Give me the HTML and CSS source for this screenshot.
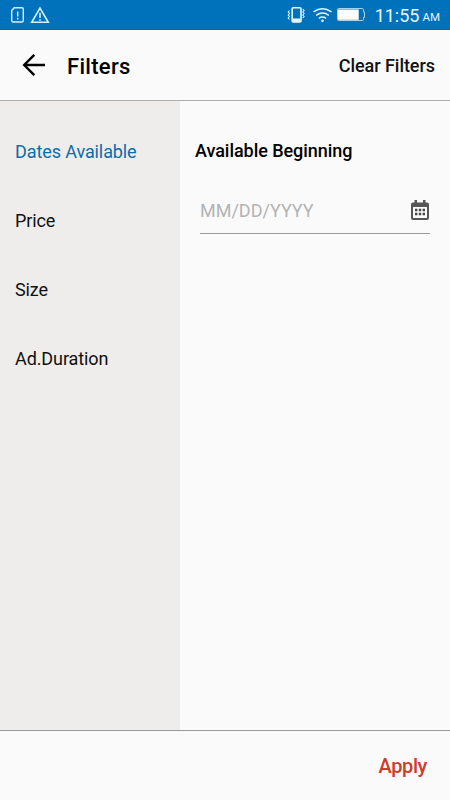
FILE: index.html
```html
<!DOCTYPE html>
<html lang="en">

<head>
  <meta charset="UTF-8">
  <meta name="viewport" content="width=device-width, initial-scale=1.0">
  <title>Filters</title>
  <link rel="stylesheet" href="styles.css">
</head>

<body>
  <div class="app">
    <div class="status-bar">
      <svg class="status-left" width="40" height="18" viewBox="0 0 40 18" fill="none" stroke="#d5f2fb" stroke-width="1.4">
        <path d="M4.2 1.7H12Q13.3 1.7 13.3 3V14.6Q13.3 16 12 16H3Q1.7 16 1.7 14.6V4.5Z" />
        <path d="M7.7 5.5V10.5M7.7 11.8V13.4" />
        <path d="M30 2.2L38.3 16.3H21.7Z" stroke-width="1.6" />
        <path d="M30 6.7V12.1M30 13.2V14.8" stroke-width="1.6" />
      </svg>
      <div class="status-right">
        <svg width="78" height="18" viewBox="0 0 78 18" fill="none" stroke="#e4f7fc" stroke-width="1.3">
          <rect x="5.2" y="1.7" width="8.8" height="14.2" rx="1" stroke-width="1.6" />
          <path d="M5.5 13.8H13.7" stroke-width="2.6" />
          <path d="M2.5 4.5L1.2 6L2.5 7.5L1.2 9L2.5 10.5L1.2 12L2.5 13.5M15.8 3L17.1 4.5L15.8 6L17.1 7.5L15.8 9L17.1 10.5L15.8 12" stroke-width="1.1" />
          <path d="M26.5 5.8Q35.5 -.5 44.5 5.8M29.2 9.3Q35.5 4.7 41.8 9.3M31.9 12.3Q35.5 9.8 39.1 12.3" stroke-width="1.5" />
          <circle cx="35.5" cy="14.7" r="1.3" fill="#e4f7fc" stroke="none" />
          <path d="M51.5 2.5H75.2Q76.5 2.5 76.5 3.7V6H77.5V11.5H76.5V13.4Q76.5 14.5 75.2 14.5H51.5Q50.5 14.5 50.5 13.5V3.5Q50.5 2.5 51.5 2.5Z" stroke="#a5d5ef" stroke-width="1" />
          <rect x="51" y="3.5" width="20.7" height="10.3" fill="#fff" stroke="none" />
        </svg>
        <span class="time">11:55</span>
        <span class="meridiem">AM</span>
      </div>
    </div>

    <div class="header">
      <svg class="back" width="24" height="24" viewBox="0 0 24 24" fill="none" stroke="#000" stroke-width="2.4">
        <path d="M12.3 1.9L2.2 12L12.3 22.1M2.2 12H23" />
      </svg>
      <h1 class="title">Filters</h1>
      <a class="clear">Clear Filters</a>
    </div>

    <div class="content">
      <ul class="menu">
        <li class="menu-item active">Dates Available</li>
        <li class="menu-item">Price</li>
        <li class="menu-item">Size</li>
        <li class="menu-item">Ad.Duration</li>
      </ul>
      <div class="panel">
        <h2 class="panel-title">Available Beginning</h2>
        <div class="date-field">
          <span class="placeholder">MM/DD/YYYY</span>
          <svg width="20" height="21" viewBox="0 0 20 21">
            <path d="M4.5 0H7V2.5H13V0H15.5V2.5H17Q19 2.5 19 4.5V18Q19 20 17 20H3Q1 20 1 18V4.5Q1 2.5 3 2.5H4.5ZM3 7V18H17V7Z" fill="#555" fill-rule="evenodd" />
            <path d="M5 8.8H7.4V11.2H5ZM8.8 8.8H11.2V11.2H8.8ZM12.6 8.8H15V11.2H12.6ZM5 12.8H7.4V15.2H5ZM8.8 12.8H11.2V15.2H8.8ZM12.6 12.8H15V15.2H12.6Z" fill="#444" />
          </svg>
        </div>
      </div>
    </div>

    <div class="footer">
      <a class="apply">Apply</a>
    </div>
  </div>
</body>

</html>
```

FILE: styles.css
```css
html,
body {
  margin: 0;
  padding: 0;
  background-color: #fafafa;
  color: #111;
  font-family: Roboto, sans-serif;
  font-size: 18px;
}

* {
  box-sizing: border-box;
}

.app {
  display: flex;
  flex-direction: column;
  height: 100vh;
}

.status-bar {
  display: flex;
  justify-content: space-between;
  height: 30px;
  padding: 6px 10px 0;
  background-color: #0072bc;
  border-bottom: 1px solid #0062a8;
  color: #e4f7fc;
}

.status-right {
  display: flex;
  align-items: flex-start;
}

.time {
  margin-left: 10px;
  font-size: 18px;
  line-height: 20px;
}

.meridiem {
  margin-left: 3px;
  font-size: 11.5px;
  line-height: 23px;
}

.header {
  display: flex;
  align-items: center;
  height: 71px;
  padding: 0 15px 0 22px;
  border-bottom: 1px solid #adadad;
}

.title {
  margin: 2px 0 0 21px;
  color: #000;
  font-size: 22px;
  font-weight: 500;
  letter-spacing: 0.3px;
}

.clear {
  margin-left: auto;
  font-weight: 500;
  letter-spacing: -0.05px;
}

.content {
  display: flex;
  flex: 1;
}

.menu {
  width: 180px;
  margin: 0;
  padding: 16px 0 0 15px;
  background-color: #eeedeb;
  list-style: none;
}

.menu-item {
  height: 69px;
  line-height: 69px;
  letter-spacing: -0.1px;
}

.active {
  color: #0b6cab;
}

.panel {
  flex: 1;
  padding: 38px 20px 0 15px;
}

.panel-title {
  margin: 0;
  color: #000;
  font-size: 18px;
  font-weight: 500;
  line-height: 24px;
  letter-spacing: -0.05px;
}

.date-field {
  display: flex;
  justify-content: space-between;
  align-items: center;
  height: 48px;
  margin: 23px 0 0 5px;
  padding-top: 2px;
  border-bottom: 1px solid #999;
}

.placeholder {
  color: #b3b3b3;
}

.footer {
  display: flex;
  justify-content: flex-end;
  align-items: center;
  height: 70px;
  padding-right: 23px;
  border-top: 1px solid #999;
}

.apply {
  color: #d13b2b;
  font-size: 20px;
  font-weight: 500;
  letter-spacing: -0.4px;
}
```
